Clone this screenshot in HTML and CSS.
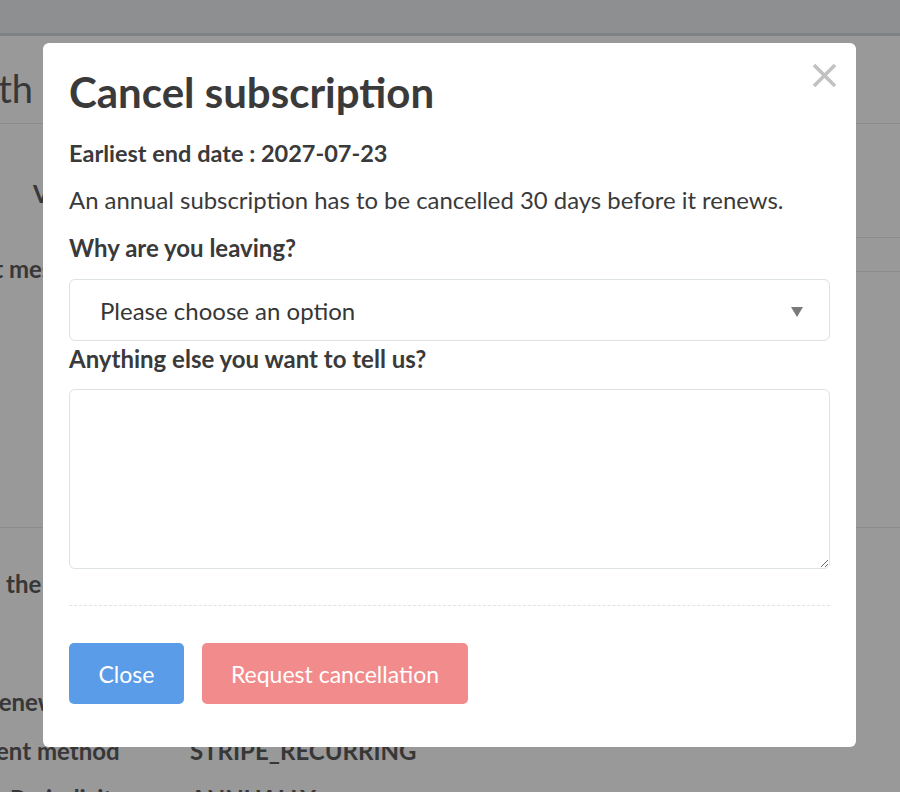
FILE: index.html
```html
<!DOCTYPE html>
<html lang="en">
<head>
<meta charset="utf-8">
<title>Cancel subscription</title>
<link rel="stylesheet" href="styles.css">
</head>
<body>
<div class="page">
  <header class="nav"></header>
  <section class="head">
    <div class="head-title"><h1>Subscription per month</h1></div>
  </section>
  <section class="details">
    <div class="row row-v"><span class="lbl">VAT number</span></div>
    <div class="row row-msg"><span class="lbl">Last message</span></div>
    <div class="note-box"></div>
  </section>
  <section class="info">
    <div class="row row-the"><span class="lbl">the plan</span></div>
    <div class="row row-renew"><span class="lbl">Renewal</span></div>
    <div class="row row-kv"><span class="lbl">ent method</span><span class="val">STRIPE_RECURRING</span></div>
    <div class="row row-kv2"><span class="lbl">Periodicity</span><span class="val">ANNUALLY</span></div>
  </section>
</div>

<div class="backdrop"></div>

<div class="modal" role="dialog" aria-labelledby="modal-title">
  <button class="modal-close" aria-label="Close">
    <svg width="25" height="23" viewBox="0 0 25 23"><path d="M2 1 L23 22 M23 1 L2 22" stroke="#c2c2c2" stroke-width="3.6" fill="none"/></svg>
  </button>
  <h2 id="modal-title" class="modal-title">Cancel subscription</h2>
  <p class="end-date">Earliest end date : 2027-07-23</p>
  <p class="notice">An annual subscription has to be cancelled 30 days before it renews.</p>
  <label class="field-label" for="reason">Why are you leaving?</label>
  <div class="select-wrap">
    <select id="reason" class="select">
      <option>Please choose an option</option>
    </select>
  </div>
  <label class="field-label field-label-2" for="extra">Anything else you want to tell us?</label>
  <textarea id="extra" class="textarea"></textarea>
  <hr class="divider">
  <div class="actions">
    <button class="btn btn-close">Close</button>
    <button class="btn btn-danger">Request cancellation</button>
  </div>
</div>
</body>
</html>
```
FILE: styles.css
```css
html, body {
  margin: 0;
  padding: 0;
}
body {
  width: 900px;
  height: 792px;
  overflow: hidden;
  font-family: Lato, "Open Sans", sans-serif;
  background: #ffffff;
}

/* ---------- background page ---------- */
.page {
  color: #5c5c5c;
}
.nav {
  height: 33px;
  background: #eceef1;
  border-bottom: 3px solid #d3d9e0;
}
.head {
  height: 87px;
  border-bottom: 1px solid #e8e8e8;
  display: flex;
  align-items: flex-end;
}
.head-title {
  width: 33px;
  display: flex;
  justify-content: flex-end;
  white-space: nowrap;
  padding-bottom: 12px;
}
.head-title h1 {
  margin: 0;
  font-size: 38px;
  font-weight: 400;
  line-height: 46px;
}
.details {
  height: 403px;
  border-bottom: 1px solid #e8e8e8;
}
.row {
  white-space: nowrap;
  font-weight: 700;
  font-size: 24px;
  line-height: 30px;
}
.row-v {
  padding-top: 55px;
  text-indent: 33px;
}
.row-msg {
  padding-top: 45px;
  text-indent: -41px;
}
.note-box {
  margin: -47px 0 0 420px;
  height: 33px;
  border-top: 1px solid #e8e8e8;
  border-bottom: 1px solid #e8e8e8;
}
.row-the {
  padding-top: 41px;
  text-indent: 6px;
}
.row-renew {
  padding-top: 88px;
  text-indent: -16px;
}
.row-kv {
  padding-top: 19px;
  display: flex;
}
.row-kv .lbl {
  width: 194px;
  margin-left: -4px;
}
.row-kv2 {
  padding-top: 18px;
  display: flex;
}
.row-kv2 .lbl {
  width: 180px;
  margin-left: 10px;
}

.backdrop {
  position: fixed;
  inset: 0;
  background: rgba(0, 0, 0, 0.4);
}

/* ---------- modal ---------- */
.modal {
  position: fixed;
  left: 43px;
  top: 43px;
  width: 813px;
  box-sizing: border-box;
  padding: 24px 26px 43px;
  background: #ffffff;
  border-radius: 6px;
  color: #3a3a3a;
}
.modal-close {
  position: absolute;
  top: 21px;
  right: 19px;
  width: 25px;
  height: 23px;
  padding: 0;
  border: 0;
  background: none;
  cursor: pointer;
}
.modal-close svg {
  display: block;
}
.modal-title {
  margin: 0;
  font-size: 42px;
  line-height: 50px;
  font-weight: 700;
}
.end-date {
  margin: 21px 0 0;
  font-size: 23.5px;
  line-height: 30px;
  font-weight: 700;
}
.notice {
  margin: 17px 0 0;
  font-size: 23.9px;
  line-height: 30px;
  font-weight: 400;
}
.field-label {
  display: block;
  margin-top: 18px;
  font-size: 24px;
  line-height: 30px;
  font-weight: 700;
}
.field-label-2 {
  margin-top: 3px;
}
.select-wrap {
  position: relative;
  margin-top: 16px;
}
.select-wrap::after {
  content: "";
  position: absolute;
  right: 27px;
  top: 28px;
  border-left: 6px solid transparent;
  border-right: 6px solid transparent;
  border-top: 10px solid #7a7a7a;
  pointer-events: none;
}
.select {
  display: block;
  width: 100%;
  height: 62px;
  box-sizing: border-box;
  padding: 0 40px 0 30px;
  border: 1px solid #dde2e5;
  border-radius: 6px;
  background: #ffffff;
  font-family: inherit;
  font-size: 24px;
  color: #363636;
  appearance: none;
  -webkit-appearance: none;
}
.textarea {
  display: block;
  width: 100%;
  height: 180px;
  box-sizing: border-box;
  margin-top: 15px;
  border: 1px solid #dde2e5;
  border-radius: 6px;
  resize: vertical;
  font-family: inherit;
  font-size: 24px;
}
.divider {
  margin: 36px 0 0;
  border: 0;
  border-top: 1px dashed #e2e2e2;
  height: 0;
}
.actions {
  display: flex;
  gap: 18px;
  margin-top: 37px;
}
.btn {
  height: 61px;
  border: 0;
  border-radius: 5px;
  font-family: inherit;
  font-size: 23px;
  color: #ffffff;
  padding: 0 29px;
  cursor: pointer;
}
.btn-close {
  padding: 0 29.5px;
  background: #5b9ce9;
}
.btn-danger {
  background: #f28b8b;
}
```
